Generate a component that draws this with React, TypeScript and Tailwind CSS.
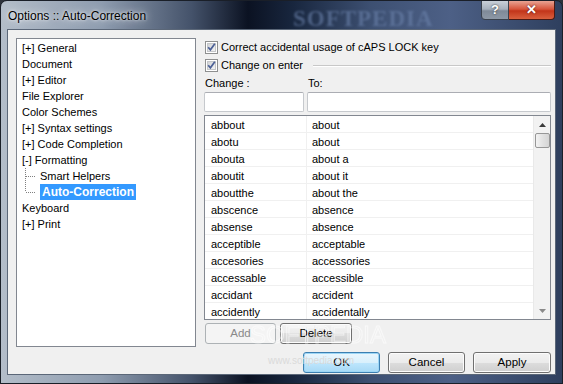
import React from "react";

const font = { fontFamily: '"Liberation Sans", Arial, sans-serif' };

function CheckBox() {
  return (
    <svg width="13" height="13" viewBox="0 0 13 13" className="shrink-0">
      <defs>
        <linearGradient id="cbg" x1="0" y1="0" x2="1" y2="1">
          <stop offset="0" stopColor="#cfd1d4" />
          <stop offset="1" stopColor="#f6f6f6" />
        </linearGradient>
      </defs>
      <rect x="0.5" y="0.5" width="12" height="12" fill="#fff" stroke="#8e8f8f" />
      <rect x="2.5" y="2.5" width="8" height="8" fill="url(#cbg)" stroke="#c4c6c9" />
      <path d="M3.2 6.2 L5.4 8.8 L9.8 2.8" fill="none" stroke="#4b5f96" strokeWidth="1.7" />
    </svg>
  );
}

const treeItems: { label: string; child?: boolean; selected?: boolean; last?: boolean }[] = [
  { label: "[+] General" },
  { label: "Document" },
  { label: "[+] Editor" },
  { label: "File Explorer" },
  { label: "Color Schemes" },
  { label: "[+] Syntax settings" },
  { label: "[+] Code Completion" },
  { label: "[-] Formatting" },
  { label: "Smart Helpers", child: true },
  { label: "Auto-Correction", child: true, selected: true, last: true },
  { label: "Keyboard" },
  { label: "[+] Print" },
];

const rows: [string, string][] = [
  ["abbout", "about"],
  ["abotu", "about"],
  ["abouta", "about a"],
  ["aboutit", "about it"],
  ["aboutthe", "about the"],
  ["abscence", "absence"],
  ["absense", "absence"],
  ["acceptible", "acceptable"],
  ["accesories", "accessories"],
  ["accessable", "accessible"],
  ["accidant", "accident"],
  ["accidently", "accidentally"],
];

function Btn({ children, w, variant = "normal" }: { children: React.ReactNode; w: string; variant?: "normal" | "focus" | "disabled" }) {
  if (variant === "disabled") {
    return (
      <div className={`${w} h-[21px] rounded-[3px] border border-[#adb2b5] bg-[#f4f4f4] flex items-center justify-center text-[#8a8a8a] text-[11.5px]`}>
        {children}
      </div>
    );
  }
  if (variant === "focus") {
    return (
      <div className={`${w} h-[21px] rounded-[3px] border border-[#3c7fb1] bg-[linear-gradient(#eaf6fd_0%,#d9f0fc_50%,#bee6fd_50%,#a7d9f5_100%)] shadow-[inset_0_0_0_1px_#9cd6f6] flex items-center justify-center text-black text-[11.5px]`}>
        {children}
      </div>
    );
  }
  return (
    <div className={`${w} h-[21px] rounded-[3px] border border-[#707070] bg-[linear-gradient(#f2f2f2_0%,#ebebeb_50%,#dddddd_50%,#cfcfcf_100%)] shadow-[inset_0_0_0_1px_#fcfcfc] flex items-center justify-center text-black text-[11.5px]`}>
      {children}
    </div>
  );
}

export default function App() {
  return (
    <div className="w-[563px] h-[384px] bg-[#2d323b] overflow-hidden" style={font}>
      <div className="relative w-[563px] h-[384px] rounded-t-[7px] border border-[#1a1f28] bg-[linear-gradient(90deg,#b3bdc9_0%,#8e9caf_18%,#44526a_34%,#0b1222_44%,#18263e_52%,#3d5072_66%,#4d6086_80%,#2e3f5e_100%)] flex flex-col overflow-hidden">
        {/* title bar */}
        <div className="relative h-[28px] flex items-center shrink-0">
          <span className="pl-[7px] pt-[1px] text-[12px] text-black [text-shadow:0_0_8px_rgba(255,255,255,0.9),0_0_3px_rgba(255,255,255,0.9)]">Options :: Auto-Correction</span>
          <span className="absolute left-[292px] top-[1px] text-[23px] font-bold tracking-[1px] text-[#6b82ab] opacity-60 blur-[1px]" style={{ fontFamily: '"Liberation Serif", serif' }}>SOFTPEDIA</span>
          <div className="absolute right-[7px] top-[-1px] flex">
            <div className="w-[28px] h-[20px] rounded-bl-[4px] border border-[#39414d] bg-[linear-gradient(#c9d0d9_0%,#a7b1bd_45%,#7f8a98_55%,#8d98a6_100%)] flex items-center justify-center text-white font-bold text-[13px] [text-shadow:0_0_2px_#222]">?</div>
            <div className="w-[46px] h-[20px] rounded-br-[4px] border border-l-0 border-[#4a1a14] bg-[linear-gradient(#e8a393_0%,#d6553c_45%,#c2351a_55%,#d9603e_100%)] flex items-center justify-center text-white font-bold text-[13px] [text-shadow:0_0_2px_#401010]">✕</div>
          </div>
        </div>
        {/* client */}
        <div className="relative mx-[6px] h-[346px] border border-[#5b6778] bg-[#f0f0f0] flex flex-col pl-[8px] pr-[4px] pt-[8px] text-[11px] text-black">
          <div className="flex gap-[8px] h-[309px]">
            {/* tree */}
            <div className="w-[180px] shrink-0 h-[309px] border border-[#828790] bg-white pt-[1px] pl-[5px]">
              {treeItems.map((it) => (
                <div key={it.label} className="h-[16px] flex items-center whitespace-nowrap">
                  {it.child && (
                    <svg width="13" height="16" className="shrink-0 ml-[2px] mr-[3px]">
                      <line x1="1.5" y1="0" x2="1.5" y2={it.last ? 8 : 16} stroke="#808080" strokeDasharray="1 1" />
                      <line x1="2" y1="8.5" x2="12" y2="8.5" stroke="#808080" strokeDasharray="1 1" />
                    </svg>
                  )}
                  {it.selected ? (
                    <span className="h-[16px] leading-[16px] px-[2px] bg-[#3399ff] text-white font-bold text-[12px]">{it.label}</span>
                  ) : (
                    <span>{it.label}</span>
                  )}
                </div>
              ))}
            </div>
            {/* right panel */}
            <div className="w-[347px] shrink-0 flex flex-col">
              <div className="h-[18px] flex items-center gap-[3px] pl-[1px] pt-[1px]">
                <CheckBox />
                <span>Correct accidental usage of cAPS LOCK key</span>
              </div>
              <div className="h-[18px] flex items-center gap-[3px] pl-[1px]">
                <CheckBox />
                <span>Change on enter</span>
                <div className="flex-1 ml-[7px] border-t border-[#c8c8c8] border-b border-b-white h-0 mt-[2px]" />
              </div>
              <div className="h-[18px] flex items-center pt-[1px]">
                <span className="w-[104px] pl-[1px]">Change :</span>
                <span>To:</span>
              </div>
              <div className="flex gap-[3px] h-[20px]">
                <div className="w-[100px] h-[20px] rounded-[2px] border border-[#c6c9cd] border-t-[#abadb3] bg-white" />
                <div className="flex-1 h-[20px] rounded-[2px] border border-[#c6c9cd] border-t-[#abadb3] bg-white" />
              </div>
              <div className="mt-[3px] h-[205px] border border-[#828790] bg-white flex">
                <div className="flex-1 overflow-hidden">
                  {rows.map(([a, b]) => (
                    <div key={a} className="h-[17px] flex border-b border-[#f0f0f0] leading-[17px]">
                      <div className="w-[102px] pl-[6px] pt-[1px] border-r border-[#f0f0f0]">{a}</div>
                      <div className="pl-[5px] pt-[1px]">{b}</div>
                    </div>
                  ))}
                </div>
                <div className="w-[17px] bg-[#f2f2f2] border-l border-[#e9e9e9] flex flex-col items-center">
                  <div className="h-[17px] w-full flex items-center justify-center">
                    <svg width="7" height="4"><path d="M0 4 L3.5 0 L7 4 Z" fill="#3a3a3a" /></svg>
                  </div>
                  <div className="w-[15px] h-[15px] rounded-[2px] border border-[#979797] bg-[linear-gradient(90deg,#f3f3f3,#e2e2e2_50%,#d5d5d5)]" />
                  <div className="flex-1" />
                  <div className="h-[17px] w-full flex items-center justify-center">
                    <svg width="7" height="4"><path d="M0 0 L3.5 4 L7 0 Z" fill="#8a8a8a" /></svg>
                  </div>
                </div>
              </div>
              <div className="mt-[3px] flex gap-[4px] pl-[1px]">
                <Btn w="w-[71px]" variant="disabled">Add</Btn>
                <Btn w="w-[72px]">Delete</Btn>
              </div>
            </div>
          </div>
          <div className="mt-[5px] flex justify-end gap-[8px]">
            <Btn w="w-[77px]" variant="focus">OK</Btn>
            <Btn w="w-[77px]">Cancel</Btn>
            <Btn w="w-[78px]">Apply</Btn>
          </div>
          {/* watermark */}
          <span className="absolute left-[242px] top-[287px] text-[24px] tracking-[0px] text-transparent [-webkit-text-stroke:1px_rgba(255,255,255,0.8)] opacity-70 pointer-events-none" style={{ fontFamily: '"Liberation Sans", sans-serif' }}>SOFTPEDIA</span>
          <span className="absolute left-[260px] top-[323px] text-[10px] text-[#dadada] pointer-events-none">www.softpedia.com</span>
        </div>
      </div>
    </div>
  );
}
